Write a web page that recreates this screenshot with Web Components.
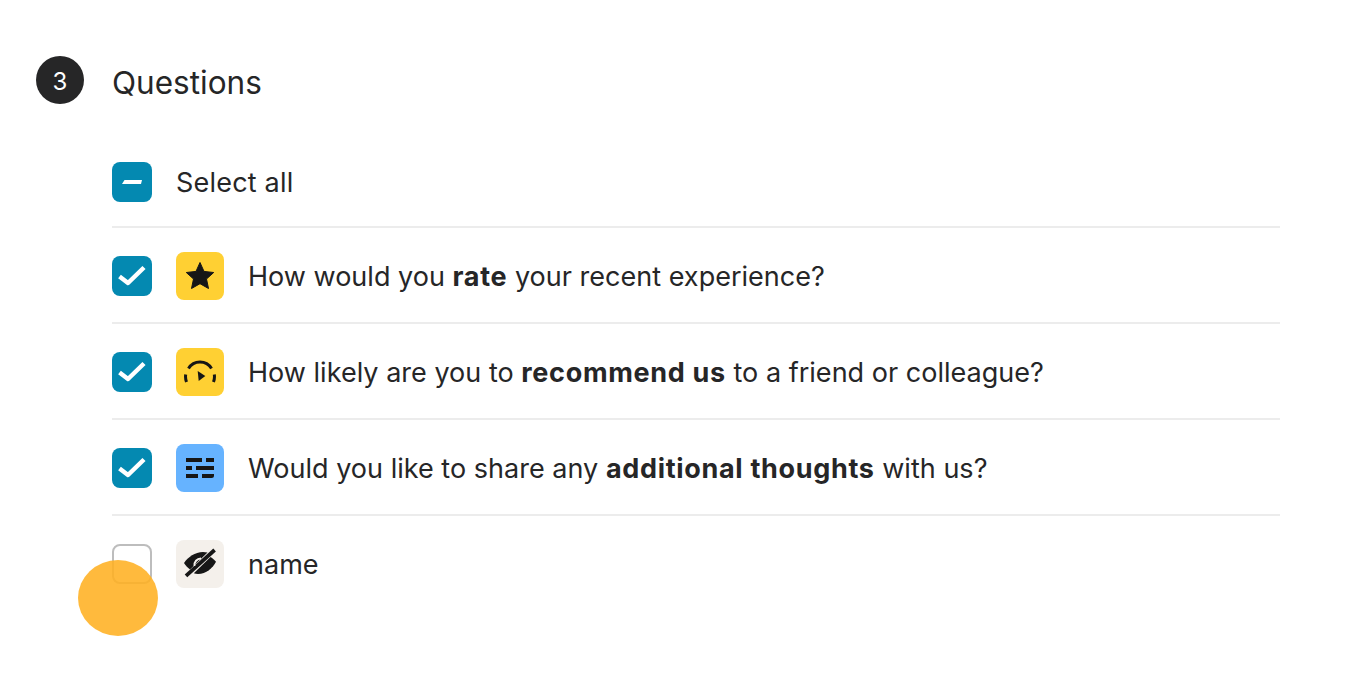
<!DOCTYPE html>
<html>
<head>
<meta charset="utf-8">
<title>Questions</title>
<style>
  html, body { margin: 0; height: 100%; background: #fff; }
  body { font-family: Inter, "Liberation Sans", sans-serif; color: #262627; overflow: hidden; }
</style>
</head>
<body>

<template id="check-box-tpl">
  <style>
    :host { display: block; width: 40px; height: 40px; flex: none; }
    .box { box-sizing: border-box; width: 40px; height: 40px; border-radius: 8px; display: flex; align-items: center; justify-content: center; background: #0489b1; }
    :host([state="off"]) .box { background: #fff; border: 2px solid #bdbdbd; }
    :host([state="off"]) svg { display: none; }
    svg { display: block; }
  </style>
  <div class="box"></div>
</template>

<template id="question-icon-tpl">
  <style>
    :host { display: flex; align-items: center; justify-content: center; width: 48px; height: 48px; border-radius: 8px; flex: none; background: var(--tile, #ffd033); }
    ::slotted(svg) { display: block; }
  </style>
  <slot></slot>
</template>

<template id="question-row-tpl">
  <style>
    :host { box-sizing: border-box; display: flex; align-items: center; gap: 24px; height: 96px; padding: 24px 0 22px; border-bottom: 2px solid #ececec; font-size: 27px; line-height: 36px; letter-spacing: .02px; }
    :host([last]) { border-bottom: 0; padding-bottom: 24px; }
    ::slotted(b) { font-weight: 700; letter-spacing: .68px; }
    .label { white-space: nowrap; padding-top: 2px; }
  </style>
  <check-box></check-box>
  <slot name="icon"></slot>
  <div class="label"><slot></slot></div>
</template>

<template id="question-step-tpl">
  <style>
    :host { display: block; padding: 56px 86px 0 36px; }
    .head { display: flex; align-items: center; gap: 28px; height: 48px; }
    .num { width: 48px; height: 48px; border-radius: 50%; background: #262627; color: #fff; font-size: 24px; line-height: 52px; text-align: center; flex: none; }
    h2 { margin: 6px 0 0; font-size: 31.5px; font-weight: 400; line-height: 40px; }
    .list { margin: 58px 0 0 76px; }
    .all { box-sizing: content-box; display: flex; align-items: flex-start; gap: 24px; height: 64px; border-bottom: 2px solid #ececec; font-size: 27px; letter-spacing: .2px; }
    .all span { line-height: 42px; }
  </style>
  <div class="head"><div class="num"><slot name="num"></slot></div><h2><slot name="title"></slot></h2></div>
  <div class="list">
    <div class="all"><check-box state="some"></check-box><span><slot name="all"></slot></span></div>
    <slot></slot>
  </div>
</template>

<question-step>
  <span slot="num">3</span>
  <span slot="title">Questions</span>
  <span slot="all">Select all</span>

  <question-row>
    <question-icon slot="icon">
      <svg width="32" height="32" viewBox="0 0 32 32"><path d="M16 2.500l4 8.900 9.700 1.100-7.200 6.500 2 9.500-8.500-4.800-8.500 4.800 2-9.500-7.200-6.500 9.700-1.100z" fill="#161616" stroke="#161616" stroke-width="1" stroke-linejoin="round"/></svg>
    </question-icon>
    How would you <b>rate</b> your recent experience?
  </question-row>

  <question-row>
    <question-icon slot="icon">
      <svg width="32" height="32" viewBox="0 0 32 32" fill="none" stroke="#161616" stroke-width="3"><path d="M4.500 12.500A13.500 13.500 0 0 1 27.500 12.500"/><path d="M1.700 18.500A14.500 14.500 0 0 0 2.500 26"/><path d="M30.300 18.500A14.500 14.500 0 0 1 29.500 26"/><path d="M13.700 15l7.600 5-6.600 5z" fill="#161616" stroke="none"/></svg>
    </question-icon>
    How likely are you to <b>recommend us</b> to a friend or colleague?
  </question-row>

  <question-row>
    <question-icon slot="icon" style="--tile:#66b3ff">
      <svg width="32" height="32" viewBox="0 0 32 32" fill="#161616"><rect x="2" y="6" width="16" height="4"/><rect x="22" y="6" width="8" height="4"/><rect x="2" y="14" width="6" height="4"/><rect x="12" y="14" width="18" height="4"/><rect x="2" y="22" width="12" height="4"/><path d="M18 22h12v1.500a2.500 2.500 0 0 1-2.500 2.500H18z"/></svg>
    </question-icon>
    Would you like to share any <b>additional thoughts</b> with us?
  </question-row>

  <question-row last off>
    <question-icon slot="icon" style="--tile:#f4f0eb">
      <svg width="32" height="32" viewBox="0 0 32 32" fill="#161616"><path d="M0 15C4 9 11 4 19 4c1.500 0 3 .2 4.500.6L6 21.500C3.500 19.800 1.500 17.500 0 15z"/><path d="M32 13.800C29 20 22 26 14 26c-1.500 0-3-.3-4.200-.8L26.500 9c2.200 1.300 4 2.800 5.500 4.800z"/><path d="M30.600 2L2 27.800" stroke="#161616" stroke-width="3.800" fill="none"/><path d="M10.500 18a6.500 6.500 0 0 1 6.500-7.500" stroke="#f4f0eb" stroke-width="2" fill="none"/></svg>
    </question-icon>
    name
  </question-row>
</question-step>

<tap-mark></tap-mark>

<script>
  const boxMarks = {
    some: '<svg width="20" height="4" viewBox="0 0 20 4"><path d="M2.500 0H20l-1 4H0z" fill="#fff"/></svg>',
    on: '<svg width="30" height="24" viewBox="0 0 30 24" fill="none"><path d="M2.500 12.500l8.500 6.500L27 3.500" stroke="#fff" stroke-width="4.500" stroke-linejoin="round"/></svg>'
  };

  function shadowFrom(el, id) {
    el.attachShadow({ mode: 'open' }).appendChild(document.getElementById(id).content.cloneNode(true));
  }

  class CheckBox extends HTMLElement {
    connectedCallback() {
      if (this.shadowRoot) return;
      shadowFrom(this, 'check-box-tpl');
      const host = this.getRootNode().host;
      if (host && host.hasAttribute('off')) this.setAttribute('state', 'off');
      const state = this.getAttribute('state') || 'on';
      this.shadowRoot.querySelector('.box').innerHTML = boxMarks[state] || '';
    }
  }

  class QuestionIcon extends HTMLElement {
    connectedCallback() { if (!this.shadowRoot) shadowFrom(this, 'question-icon-tpl'); }
  }

  class QuestionRow extends HTMLElement {
    connectedCallback() { if (!this.shadowRoot) shadowFrom(this, 'question-row-tpl'); }
  }

  class QuestionStep extends HTMLElement {
    connectedCallback() { if (!this.shadowRoot) shadowFrom(this, 'question-step-tpl'); }
  }

  // touch indicator that sits over the last checkbox
  class TapMark extends HTMLElement {
    connectedCallback() {
      if (this.shadowRoot) return;
      this.attachShadow({ mode: 'open' }).innerHTML = `
        <style>
          :host { position: absolute; left: 78px; top: 560px; width: 80px; height: 76px; border-radius: 50%; background: rgba(255, 176, 32, .87); }
        </style>`;
    }
  }

  customElements.define('check-box', CheckBox);
  customElements.define('question-icon', QuestionIcon);
  customElements.define('question-row', QuestionRow);
  customElements.define('question-step', QuestionStep);
  customElements.define('tap-mark', TapMark);
</script>
</body>
</html>
